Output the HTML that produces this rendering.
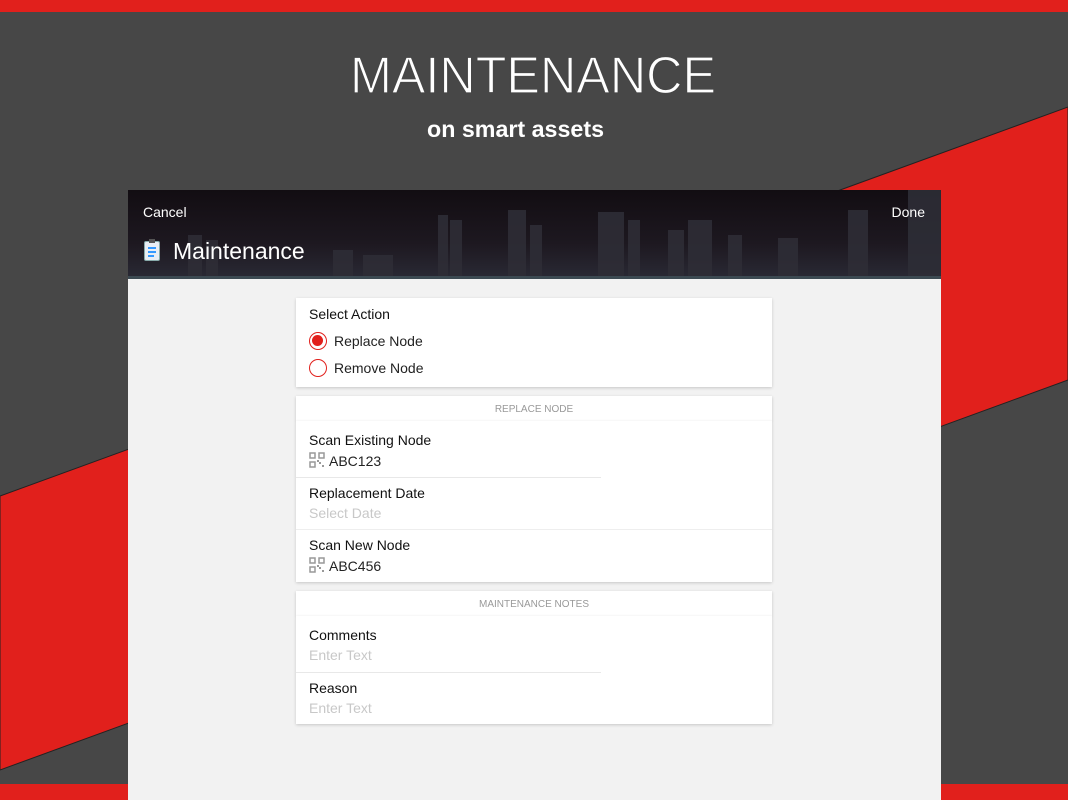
<!DOCTYPE html>
<html><head><meta charset="utf-8"><style>
*{margin:0;padding:0;box-sizing:border-box}
body{width:1068px;height:800px;overflow:hidden;background:#474747;position:relative;font-family:"Liberation Sans",sans-serif}
.abs{position:absolute}
.card{position:absolute;left:296px;width:476px;background:#fff;box-shadow:0 1px 3px rgba(0,0,0,.18)}
.lbl{position:absolute;left:13px;font-size:14px;color:#111}
.val{position:absolute;left:13px;font-size:14px;color:#222}
.ph{position:absolute;left:13px;font-size:14px;color:#c8c8c8}
.hdr{position:absolute;left:296px;width:476px;height:25px;background:#fff;box-shadow:0 1px 3px rgba(0,0,0,.2);text-align:center;font-size:10px;color:#999;line-height:28px}
.sep{position:absolute;left:0;width:305px;height:1px;background:#e8e8e8}
.qr{display:inline-block;width:16px;height:16px;vertical-align:-2px;margin-right:4px}
</style></head><body>
<div class="abs" style="left:0;top:0;width:1068px;height:12px;background:#e1201c"></div>
<div class="abs" style="left:0;top:784px;width:1068px;height:16px;background:#e1201c"></div>
<svg class="abs" style="left:0;top:0" width="1068" height="800">
<polygon points="0,496 1068,107 1068,380 0,770" fill="#e1201c" stroke="#222" stroke-width="1"/>
<text x="350" y="93" font-family="Liberation Sans" font-size="52" fill="#fff" textLength="366" lengthAdjust="spacingAndGlyphs" stroke="#474747" stroke-width="1.2">MAINTENANCE</text>
<text x="427" y="137" font-family="Liberation Sans" font-weight="bold" font-size="23" fill="#fff" textLength="177" lengthAdjust="spacingAndGlyphs">on smart assets</text>
</svg>
<div class="abs" style="left:128px;top:190px;width:813px;height:610px;background:#f2f2f2"></div>
<div class="abs" style="left:128px;top:190px;width:813px;height:89px;background:linear-gradient(180deg,#120d12 0%,#1d1820 60%,#2a2a35 100%);overflow:hidden">
<svg width="813" height="89" style="position:absolute;left:0;top:0">
<g fill="#2e2d36" opacity=".9">
<rect x="60" y="45" width="14" height="44"/><rect x="78" y="50" width="12" height="39"/><rect x="205" y="60" width="20" height="29"/><rect x="235" y="65" width="30" height="24"/><rect x="310" y="25" width="10" height="64"/><rect x="322" y="30" width="12" height="59"/><rect x="380" y="20" width="18" height="69"/><rect x="402" y="35" width="12" height="54"/><rect x="470" y="22" width="26" height="67"/><rect x="500" y="30" width="12" height="59"/><rect x="540" y="40" width="16" height="49"/><rect x="560" y="30" width="24" height="59"/><rect x="600" y="45" width="14" height="44"/><rect x="650" y="48" width="20" height="41"/><rect x="720" y="20" width="20" height="69"/><rect x="780" y="0" width="33" height="89"/>
</g>
<rect x="0" y="86" width="813" height="3" fill="#3c4a52"/>
</svg>
<div class="abs" style="left:15px;top:14px;color:#fff;font-size:14px">Cancel</div>
<div class="abs" style="right:16px;top:14px;color:#fff;font-size:14px">Done</div>
<div class="abs" style="left:16px;top:51px;width:16px;height:20px;background:#e8eef4;border-radius:2px;border:1px solid #8aa">
<div style="position:absolute;left:4px;top:-3px;width:6px;height:4px;background:#555"></div>
<div style="position:absolute;left:3px;top:5px;width:8px;height:2px;background:#39f"></div>
<div style="position:absolute;left:3px;top:9px;width:8px;height:2px;background:#39f"></div>
<div style="position:absolute;left:3px;top:13px;width:6px;height:2px;background:#39f"></div>
</div>
<div class="abs" style="left:45px;top:48px;color:#fff;font-size:23px">Maintenance</div>
</div>

<div class="card" style="top:298px;height:89px">
<div class="lbl" style="top:8px">Select Action</div>
<div class="abs" style="left:13px;top:34px;width:18px;height:18px;border:1.5px solid #e1201c;border-radius:50%"><div style="margin:2px;width:11px;height:11px;border-radius:50%;background:#e1201c"></div></div>
<div class="val" style="left:38px;top:35px">Replace Node</div>
<div class="abs" style="left:13px;top:61px;width:18px;height:18px;border:1.5px solid #e1201c;border-radius:50%"></div>
<div class="val" style="left:38px;top:62px">Remove Node</div>
</div>

<div class="hdr" style="top:396px">REPLACE NODE</div>
<div class="card" style="top:421px;height:161px">
<div class="lbl" style="top:11px">Scan Existing Node</div>
<div class="val" style="top:31px"><svg class="qr" viewBox="0 0 16 16"><g fill="none" stroke="#999" stroke-width="1.5"><rect x="1" y="1" width="5" height="5"/><rect x="10" y="1" width="5" height="5"/><rect x="1" y="10" width="5" height="5"/></g><rect x="10" y="10" width="2" height="2" fill="#999"/><rect x="13" y="13" width="2" height="2" fill="#999"/><rect x="8" y="8" width="2" height="2" fill="#999"/></svg>ABC123</div>
<div class="sep" style="top:56px"></div>
<div class="lbl" style="top:64px">Replacement Date</div>
<div class="ph" style="top:84px">Select Date</div>
<div class="sep" style="top:108px;width:476px;background:#eee"></div>
<div class="lbl" style="top:116px">Scan New Node</div>
<div class="val" style="top:136px"><svg class="qr" viewBox="0 0 16 16"><g fill="none" stroke="#999" stroke-width="1.5"><rect x="1" y="1" width="5" height="5"/><rect x="10" y="1" width="5" height="5"/><rect x="1" y="10" width="5" height="5"/></g><rect x="10" y="10" width="2" height="2" fill="#999"/><rect x="13" y="13" width="2" height="2" fill="#999"/><rect x="8" y="8" width="2" height="2" fill="#999"/></svg>ABC456</div>
</div>

<div class="hdr" style="top:591px">MAINTENANCE NOTES</div>
<div class="card" style="top:616px;height:108px">
<div class="lbl" style="top:11px">Comments</div>
<div class="ph" style="top:31px">Enter Text</div>
<div class="sep" style="top:56px"></div>
<div class="lbl" style="top:64px">Reason</div>
<div class="ph" style="top:84px">Enter Text</div>
</div>
</body></html>
